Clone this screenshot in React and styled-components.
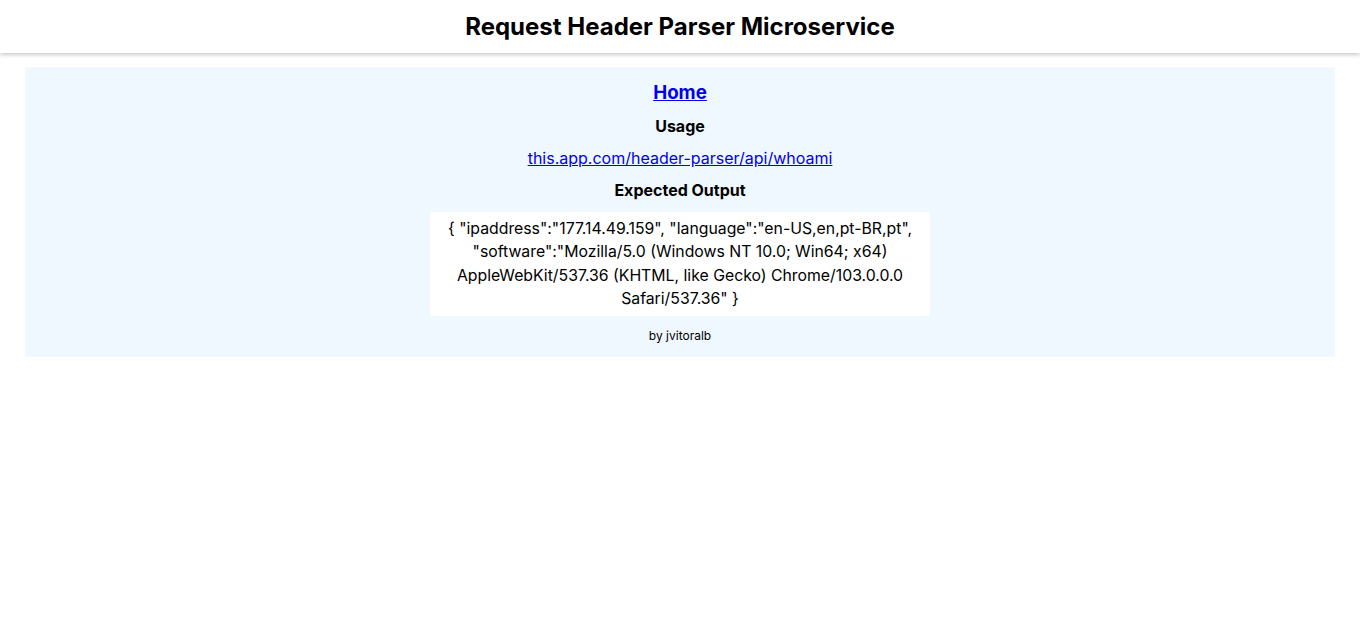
import React from "react"
import styled, {createGlobalStyle} from "styled-components";

const GlobalStyle = createGlobalStyle`
  body {
    margin: 0;
    font-family: Inter, "Noto Sans", sans-serif;
    color: #000;
    background: #fff;
  }
`;

const Header = styled.header`
  height: 53px;
  display: flex;
  align-items: center;
  justify-content: center;
  box-shadow: 0 2px 4px rgba(0, 0, 0, 0.2);
`;

const Title = styled.h1`
  margin: 0;
  font-size: 24px;
  font-weight: 700;
`;

const Main = styled.main`
  margin: 14px 25px 0;
  padding: 14px 0 13px;
  background: #f0f8ff;
  display: flex;
  flex-direction: column;
  align-items: center;
`;

const HomeLink = styled.a`
  font-size: 18.72px;
  font-weight: 700;
  line-height: 24px;
  color: #0000ee;
  text-decoration: underline;
`;

const Heading = styled.h3`
  margin: ${props => props.top || 12}px 0 0;
  font-size: 16px;
  font-weight: 700;
  line-height: 19px;
`;

const UsageLink = styled.a`
  margin-top: 13px;
  font-size: 16px;
  line-height: 19px;
  color: #0000ee;
  text-decoration: underline;
`;

const Output = styled.div`
  margin-top: 11.5px;
  width: 500px;
  box-sizing: border-box;
  padding: 5.5px 12px 6px;
  background: #fff;
  font-size: 15.8px;
  line-height: 23.3px;
  text-align: center;
`;

const Footer = styled.footer`
  margin-top: 13px;
  font-size: 12px;
  line-height: 14.5px;
`;

const App = () => {
    return <React.Fragment>
        <GlobalStyle/>
        <Header>
            <Title>Request Header Parser Microservice</Title>
        </Header>
        <Main>
            <HomeLink href="#">Home</HomeLink>
            <Heading>Usage</Heading>
            <UsageLink href="#">this.app.com/header-parser/api/whoami</UsageLink>
            <Heading top={13}>Expected Output</Heading>
            <Output>
                {'{ "ipaddress":"177.14.49.159", "language":"en-US,en,pt-BR,pt", "software":"Mozilla/5.0 (Windows NT 10.0; Win64; x64) AppleWebKit/537.36 (KHTML, like Gecko) Chrome/103.0.0.0 Safari/537.36" }'}
            </Output>
            <Footer>by jvitoralb</Footer>
        </Main>
    </React.Fragment>
};

export default App;
